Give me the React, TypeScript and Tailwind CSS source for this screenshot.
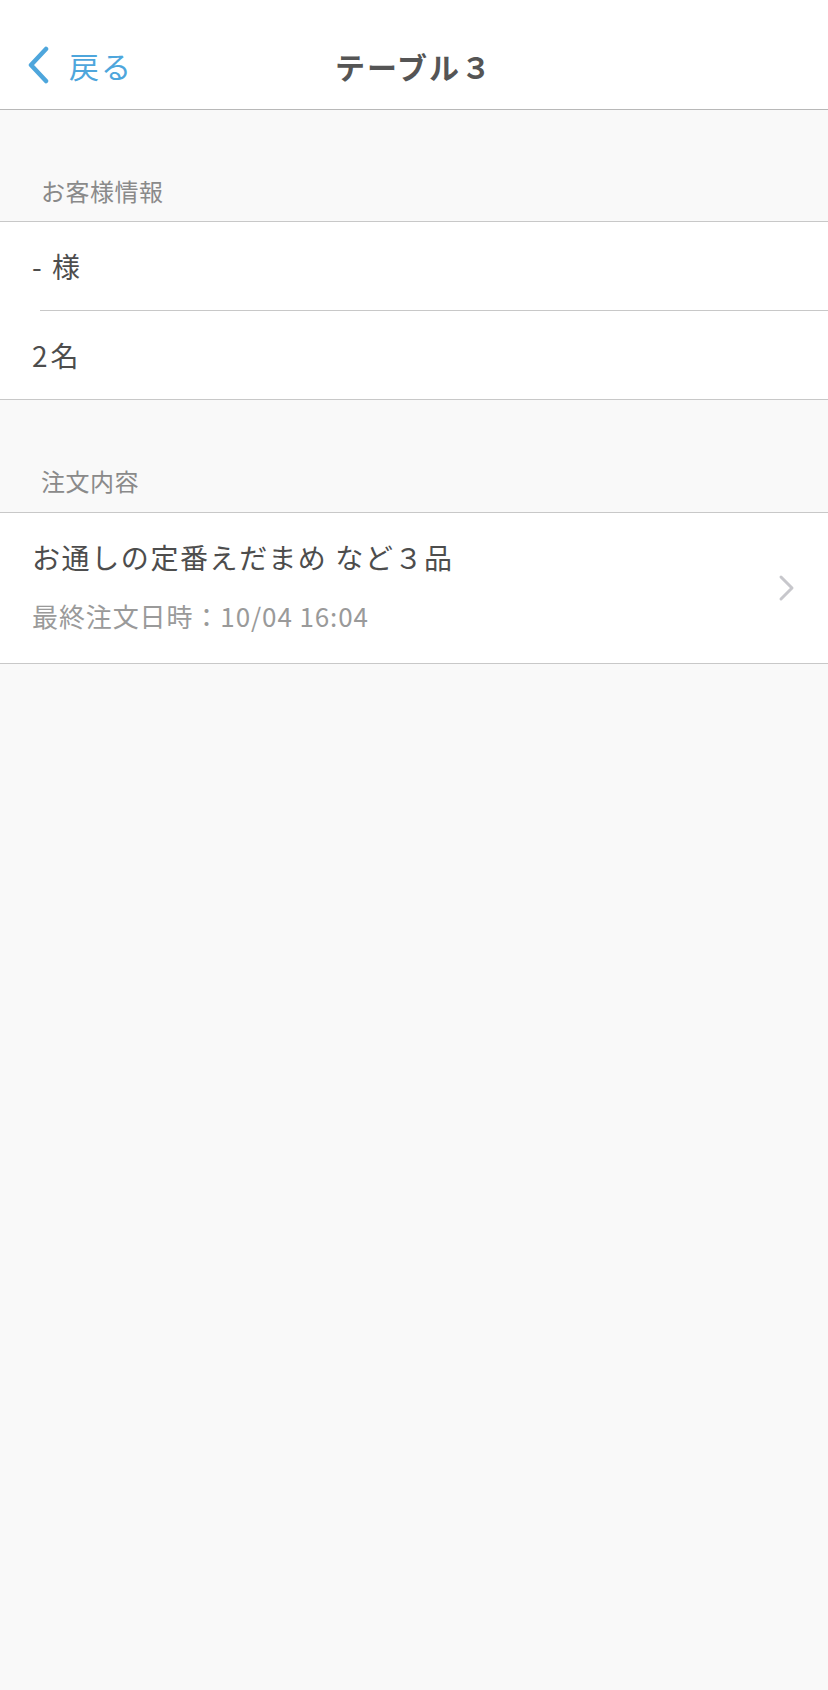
import React from "react";

const font = {
  fontFamily: '"Noto Sans CJK JP", "Noto Sans", "Liberation Sans", sans-serif',
};

function ChevronRight() {
  return (
    <svg width="18" height="28" viewBox="0 0 18 28" fill="none">
      <path d="M3 3 L14 14 L3 25" stroke="#c7c7cc" strokeWidth="3" strokeLinecap="round" strokeLinejoin="round" />
    </svg>
  );
}

export default function App() {
  return (
    <div className="min-h-[1690px] w-[828px] bg-[#f9f9f9] text-[#4d4d4d]" style={font}>
      {/* header */}
      <div className="relative flex h-[110px] items-end border-b border-[#b8b8b8] bg-white pb-[25px]">
        <button className="flex items-center pl-[26px] text-[#4ea6dc]">
          <svg width="24" height="38" viewBox="0 0 24 38" fill="none">
            <path d="M20 3 L5 19 L20 35" stroke="#4ea6dc" strokeWidth="4.5" strokeLinecap="round" strokeLinejoin="round" />
          </svg>
          <span className="ml-[19px] text-[30px] leading-none tracking-[2px]">戻る</span>
        </button>
        <h1 className="absolute bottom-[28px] left-0 right-0 text-center text-[30px] font-bold leading-none tracking-[2px] text-[#555555]">
          テーブル３
        </h1>
      </div>

      {/* customer info */}
      <div className="flex h-[111px] items-end pb-[12px] pl-[41px] text-[24px] tracking-[0.5px] text-[#8a8a8a]">お客様情報</div>
      <div className="border-y border-[#c8c8c8] bg-white">
        <div className="flex h-[88px] items-center pl-[32px] text-[28px] tracking-[2px]">- 様</div>
        <div className="ml-[40px] border-t border-[#c8c8c8]" />
        <div className="flex h-[88px] items-center pl-[32px] text-[28px] tracking-[3px]">2名</div>
      </div>

      {/* orders */}
      <div className="flex h-[112px] items-end pb-[13px] pl-[41px] text-[24px] tracking-[0.5px] text-[#8a8a8a]">注文内容</div>
      <div className="flex h-[152px] items-center justify-between border-y border-[#c8c8c8] bg-white pl-[32px] pr-[32px]">
        <div className="flex flex-col gap-[32px] pb-[4px]">
          <div className="text-[28px] leading-none tracking-[1.6px]">お通しの定番えだまめ など３品</div>
          <div className="text-[26px] leading-none tracking-[0.9px] text-[#9a9a9a]">最終注文日時：10/04 16:04</div>
        </div>
        <ChevronRight />
      </div>
    </div>
  );
}
